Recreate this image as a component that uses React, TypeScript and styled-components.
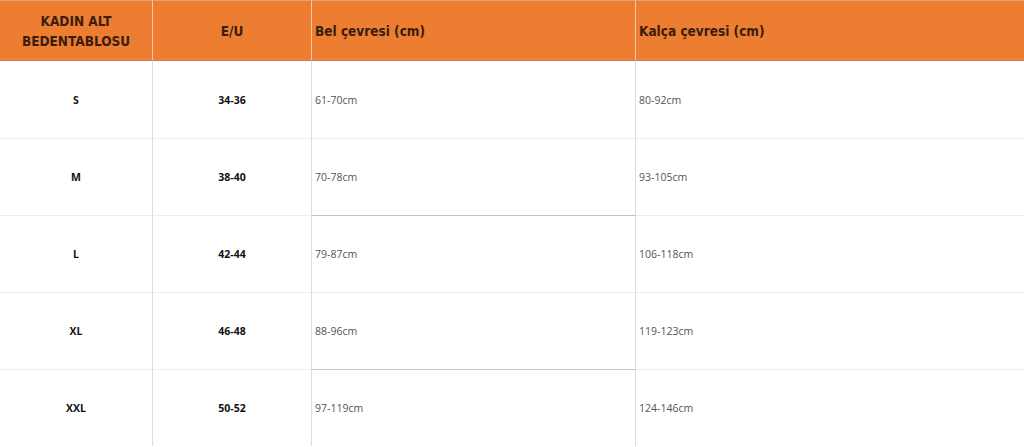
import React from "react";
import styled, { createGlobalStyle } from "styled-components";

const Global = createGlobalStyle`
  html, body { margin: 0; padding: 0; background: #fff; }
  body { width: 1024px; height: 447px; overflow: hidden; }
`;

const Table = styled.div`
  display: grid;
  grid-template-columns: 153px 159px 324px 388px;
  grid-template-rows: 61px repeat(5, 77px);
  width: 1024px;
`;

const HeadCell = styled.div<{ $center?: boolean; $last?: boolean }>`
  background: #ed7d31;
  border-top: 1px solid #d9a57c;
  border-bottom: 1px solid #c27a4c;
  box-shadow: inset 0 -1px 0 #e58a4a;
  border-right: ${(p) => (p.$last ? "none" : "1px solid #f4c9a8")};
  display: flex;
  align-items: center;
  justify-content: ${(p) => (p.$center ? "center" : "flex-start")};
  text-align: ${(p) => (p.$center ? "center" : "left")};
  padding: 0 ${(p) => (p.$center ? "0" : "3px")};
  font-family: "DejaVu Sans Condensed", "DejaVu Sans", sans-serif;
  font-weight: bold;
  font-size: 13.5px;
  line-height: 20px;
  color: #3a1e0c;
  box-sizing: border-box;
`;

const Cell = styled.div<{ $bold?: boolean; $last?: boolean; $boxed?: boolean; $firstRow?: boolean }>`
  box-sizing: border-box;
  display: flex;
  align-items: center;
  justify-content: ${(p) => (p.$bold ? "center" : "flex-start")};
  padding: 0 ${(p) => (p.$bold ? "0" : "3px")};
  border-right: ${(p) => (p.$last ? "none" : "1px solid #dcdcdc")};
  border-top: ${(p) => (p.$firstRow ? "none" : p.$boxed ? "1px solid #c4c4c4" : "1px solid #ececec")};
  font-family: "Open Sans", "Noto Sans", sans-serif;
  font-size: 10.5px;
  font-weight: ${(p) => (p.$bold ? 700 : 400)};
  color: ${(p) => (p.$bold ? "#111" : "#555")};
`;

const rows = [
  ["S", "34-36", "61-70cm", "80-92cm"],
  ["M", "38-40", "70-78cm", "93-105cm"],
  ["L", "42-44", "79-87cm", "106-118cm"],
  ["XL", "46-48", "88-96cm", "119-123cm"],
  ["XXL", "50-52", "97-119cm", "124-146cm"],
];

export default function App() {
  return (
    <>
      <Global />
      <Table>
        <HeadCell $center>
          KADIN ALT
          <br />
          BEDENTABLOSU
        </HeadCell>
        <HeadCell $center>E/U</HeadCell>
        <HeadCell>Bel çevresi (cm)</HeadCell>
        <HeadCell $last>Kalça çevresi (cm)</HeadCell>
        {rows.map((r, i) => (
          <React.Fragment key={r[0]}>
            <Cell $bold $firstRow={i === 0}>{r[0]}</Cell>
            <Cell $bold $firstRow={i === 0}>{r[1]}</Cell>
            <Cell $firstRow={i === 0} $boxed={i === 2 || i === 4}>{r[2]}</Cell>
            <Cell $last $firstRow={i === 0}>{r[3]}</Cell>
          </React.Fragment>
        ))}
      </Table>
    </>
  );
}
